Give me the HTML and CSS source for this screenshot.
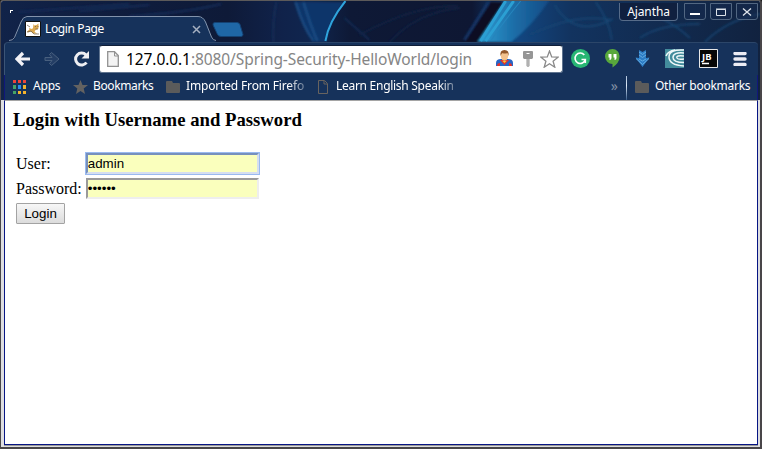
FILE: index.html
```html
<!DOCTYPE html>
<html lang="en">
<head>
<meta charset="utf-8">
<title>Login Page</title>
<link rel="stylesheet" href="styles.css">
</head>
<body>
<div class="window">
  <header class="titlebar">
    <svg class="wallpaper" viewBox="2 1 758 99" preserveAspectRatio="none" aria-hidden="true">
      <defs>
        <linearGradient id="sky" x1="0" x2="1" y1="0" y2="0">
          <stop offset="0" stop-color="#112349"/><stop offset=".15" stop-color="#0f1d3e"/><stop offset=".3" stop-color="#0e1a38"/><stop offset=".37" stop-color="#10224a"/><stop offset=".41" stop-color="#10264f"/><stop offset=".46" stop-color="#0e1936"/><stop offset=".62" stop-color="#0e1733"/><stop offset=".68" stop-color="#124680"/><stop offset=".75" stop-color="#12335f"/><stop offset="1" stop-color="#11223f"/>
        </linearGradient>
        <linearGradient id="ray" x1="0" x2="1" y1="0" y2="0"><stop offset="0" stop-color="#2f9fd4"/><stop offset=".5" stop-color="#1c6ea8"/><stop offset="1" stop-color="#154b85"/></linearGradient>
        <filter id="soft" x="-20%" y="-20%" width="140%" height="140%"><feGaussianBlur stdDeviation="1"/></filter>
      </defs>
      <path fill="url(#sky)" d="M0 0h762v102H0z"/>
      <g fill="none" filter="url(#soft)">
        <path stroke="#142c57" stroke-width="2" d="M20 12L130 4M80 11l70-6M130 16q55-3 92-12"/>
        <path stroke="#14305c" stroke-width="1.500" d="M277 2q-4 20-3 40M345 18l25 22"/>
        <path fill="#11356a" d="M295 2q10 28 19 40h13q3-22 18-40z"/>
        <path stroke="#1b5088" stroke-width="2" d="M296 2q8 26 18 39M304 2q8 26 14 39"/>
        <path stroke="#122546" stroke-width="1.500" d="M360 35q55-30 98-29M390 42q28-30 70-34"/>
        <path stroke="#16386b" stroke-width="3" d="M489 2l-24 38"/>
        <path fill="#080f22" d="M491 2h13l-24 40h-15z"/>
        <path fill="url(#ray)" d="M506 0h44q-18 26-38 42h-34z"/>
        <path stroke="#184674" stroke-width="1.500" d="M596 2q14 20 16 38M555 5q20 34 58 14M530 35q45-22 82-15M640 38q20-14 60-14M705 42q22-22 55-28M620 8q40 2 70 30"/>
      </g>
      <path fill="none" stroke="#2fa4dc" stroke-width="2" d="M346 1q-17 21-20 40"/>
      <path fill="none" stroke="#2b9fd3" stroke-width="3" d="M506 1l-25 40M514 1l-28 40"/>
      <path fill="none" stroke="#2685bd" stroke-width="1" d="M521 1q-18 22-30 40"/>
    </svg>
    <svg class="cursor-mark" width="4" height="4" viewBox="0 0 4 4"><path d="M0 0h3v1H1v2H0z" fill="#fff"/></svg>
    <div class="tab">
      <svg class="tab-shape" width="207" height="27" viewBox="0 0 207 27">
        <path d="M0 25.500q4 0 6-3L12 7q2-6 7-6h170q6 0 8 5l6 16q2 3.500 4 3.500V27H0z" fill="#16325b"/>
        <path d="M0 24.500q4 0 5.500-3L12 6q2-5.500 6-5.500h171q5 0 7.500 5.500l6 15q1.500 3.500 4.500 3.500" fill="none" stroke="#8293ac"/>
      </svg>
      <svg class="favicon" width="16" height="16" viewBox="0 0 16 16">
        <path fill="#fff" stroke="#111" d="M.5.5h15v15H.5z"/><path fill="#dba850" d="M8.500 3l1 1.500 2-.5 2-1.500v5l-3 1.500-1 2 3 1.500H8l-2-2-3 1-1-1 2.500-2L4 7l3 1 1-1z"/><path d="M2 4l3 2m-3 5l4-1 3 3h5M10 5.500h1m1.500 0h1m-3 2.500h2.500" fill="none" stroke="#665947" stroke-width=".7"/>
      </svg>
      <span class="tab-title">Login Page</span>
      <svg class="tab-close" width="9" height="9" viewBox="0 0 9 9"><path d="M1 1l7 7M8 1L1 8" stroke="#a5b0c1" stroke-width="1.500"/></svg>
    </div>
    <svg class="new-tab" width="32" height="15" viewBox="0 0 32 15"><path d="M3 .5h22q2 0 3 2l3 10q0 2-2 2H9q-3 0-4-3L1 3Q.5.5 3 .5z" fill="#1f67a6" stroke="#144273"/></svg>
    <div class="controls">
      <span class="profile">Ajantha</span>
      <span class="ctl"><svg width="20" height="15"><path d="M5 10h10" stroke="#fff" stroke-width="2"/></svg></span>
      <span class="ctl"><svg width="20" height="15"><path d="M5.500 5.500h9v6h-9zM5 5h10" fill="none" stroke="#dde3ea"/></svg></span>
      <span class="ctl"><svg width="20" height="15"><path d="M6 4.500l8 7m0-7l-8 7" stroke="#dde3ea" stroke-width="1.300"/></svg></span>
    </div>
  </header>

  <nav class="toolbar">
    <svg class="nav-icon" width="16" height="16" viewBox="0 0 16 16"><path d="M8 2L2 8l6 6M2.500 8H15" fill="none" stroke="#f2f2f6" stroke-width="3.200"/></svg>
    <svg class="nav-icon" width="16" height="16" viewBox="0 0 16 16"><path d="M1 6.500h7L5.500 3.500l2-2L15 8l-7.500 6.500-2-2L8 9.500H1z" fill="#243e65" stroke="#49607f"/></svg>
    <svg class="nav-icon" width="17" height="16" viewBox="0 0 17 16"><path d="M13 4A6 6 0 1 0 13.500 11.500" fill="none" stroke="#eeeef2" stroke-width="3"/><path d="M16 0v7.500H8.500z" fill="#eeeef2"/></svg>
    <div class="omnibox">
      <svg width="12" height="16" viewBox="0 0 12 16"><path d="M.7.700h6.800l3.800 3.800v10.800H.7z" fill="#f3f3f3" stroke="#919191" stroke-width="1.300"/><path d="M7.500 1v4H11" fill="none" stroke="#919191"/></svg>
      <span class="url"><b>127.0.0.1</b>:8080/Spring-Security-HelloWorld/login</span>
      <svg class="hero" width="17" height="17" viewBox="0 0 17 17"><path d="M0 16V13q0-4 5-4h7q5 0 5 4v3z" fill="#2865c6"/><path d="M1 16q0-3 3-3v3zM16 16q0-3-3-3v3zM4 10h9l-4.500 5z" fill="#e3322b"/><path d="M6.500 11h4l-2 2z" fill="#f3ca35"/><path d="M6 7h5v3l-2.500 1L6 10z" fill="#dca16a"/><ellipse cx="8.500" cy="5.500" rx="3.700" ry="4.500" fill="#f3c28e"/><path d="M4.500 6q-1-6 4-6t4 6l-1-3q-3 1-5 0l-1 1z" fill="#93582b"/></svg>
      <svg class="key" width="10" height="16" viewBox="0 0 10 16"><path d="M1 0h8q1 0 1 1v6l-1 1H6.500v7L5 16l-1.500-1V8H1L0 7V1q0-1 1-1z" fill="#969696"/><path d="M3.500 2.500h3" stroke="#fff"/><path d="M5 8v7" stroke="#ccc"/></svg>
      <svg class="star" width="19" height="18" viewBox="0 0 19 18"><path d="M9.500 1l2.200 5.900 6.300.3-4.900 4 1.700 6-5.300-3.400-5.300 3.400 1.700-6-4.900-4 6.300-.3z" fill="#fff" stroke="#8a8a8a" stroke-width="1.300"/></svg>
    </div>
    <div class="extensions">
      <svg width="19" height="19" viewBox="0 0 19 19"><circle cx="9.500" cy="9.500" r="9.500" fill="#28b674"/><path d="M13.300 6A5.200 5.200 0 1 0 14.300 10.500H10.500M14.300 10v4" fill="none" stroke="#fff" stroke-width="1.600"/></svg>
      <svg width="15" height="19" viewBox="0 0 15 19"><path d="M7.500 0a7 7 0 0 1 7 7.500Q14.500 14 7.500 18.500V15A7.500 7.500 0 0 1 7.500 0z" fill="#58a83c"/><path d="M3.500 5h3v4q0 2-2 2V8.500h-1zM8.500 5h3v4q0 2-2 2V8.500h-1z" fill="#fff"/></svg>
      <svg width="15" height="17" viewBox="0 0 15 17"><path d="M4 0l3.500 2L11 0v8l3.500-.5L7.500 17 .5 7.500 4 8z" fill="#2c7cc6"/><path d="M4 2l3.500 2.500L11 2M4 5l3.500 2.500L11 5M1 8.500l6.500 6 6.500-6M4 9l3.500 2L11 9" fill="none" stroke="#64acdf" stroke-width="1"/></svg>
      <svg width="19" height="19" viewBox="0 0 19 19"><path d="M0 0h19v19H0z" fill="#438c9c"/><path d="M19 1Q4 0 4 8q0 8 15 9M19 4Q8 3 8 8.500q0 5 11 5M19 7q-8-1-7 2 1 2 7 1M10 1Q3 2 1 7" fill="none" stroke="#eef7f8" stroke-width="1.500"/></svg>
      <svg width="19" height="19" viewBox="0 0 19 19"><path d="M.5.500h18v18H.5z" fill="#070707" stroke="#e8e8e8"/><text class="jb" x="3" y="10.500">JB</text><path d="M3 14.500h7" stroke="#fff" stroke-width="1.300"/></svg>
      <svg width="14" height="14" viewBox="0 0 14 14"><path d="M2 1.500h10M2 7h10M2 12.500h10" stroke="#ececf4" stroke-width="3.400" stroke-linecap="round"/></svg>
    </div>
  </nav>

  <nav class="bookmarks">
    <svg class="apps" width="13" height="14" viewBox="0 0 13 14"><path fill="#ef4438" d="M0 0h3v3H0zM5 0h3v3H5zM10 0h3v3h-3z"/><path fill="#46a466" d="M0 5h3v4H0zM0 11h3v3H0z"/><path fill="#2c8eed" d="M5 5h3v4H5z"/><path fill="#f3b32c" d="M10 5h3v4h-3zM5 11h3v3H5zM10 11h3v3h-3z"/></svg>
    <span class="t-apps">Apps</span>
    <svg class="bm-star" width="15" height="14" viewBox="0 0 15 14"><path d="M7.500 0l2 5H15l-4.300 3.500L12 14l-4.500-3L3 14l1.300-5.500L0 5h5.500z" fill="#636261"/></svg>
    <span class="t-book">Bookmarks</span>
    <svg class="folder" width="14" height="12" viewBox="0 0 14 12"><path d="M0 1q0-1 1-1h5l1 2h6q1 0 1 1v8q0 1-1 1H1q-1 0-1-1z" fill="#5b5b5b"/></svg>
    <span class="t-import fade">Imported From Firefo</span>
    <svg class="page-icon" width="10" height="14" viewBox="0 0 10 14"><path d="M.5.500h6l3 3v10h-9zM6 1v3h3" fill="none" stroke="#68635f"/></svg>
    <span class="t-learn fade">Learn English Speakin</span>
    <span class="more">»</span>
    <span class="separator"></span>
    <svg class="folder" width="14" height="12" viewBox="0 0 14 12"><path d="M0 1q0-1 1-1h5l1 2h6q1 0 1 1v8q0 1-1 1H1q-1 0-1-1z" fill="#5b5b5b"/></svg>
    <span class="t-other">Other bookmarks</span>
  </nav>

  <main class="page">
    <h3>Login with Username and Password</h3>
    <form>
      <table>
        <tr><td>User:</td><td><input class="focused" type="text" value="admin"></td></tr>
        <tr><td>Password:</td><td><input type="password" value="secret"></td></tr>
        <tr><td colspan="2"><button type="button">Login</button></td></tr>
      </table>
    </form>
  </main>
</div>
</body>
</html>
```
FILE: styles.css
```css
* { box-sizing: border-box; }
body { margin: 0; overflow: hidden; background: #1a1a1a; }
svg { display: block; flex: none; }
.window {
  position: relative;
  display: flex;
  flex-direction: column;
  width: 762px;
  height: 449px;
  border: 2px solid #494649;
  border-top: 1px solid #5c5a5a;
  border-left-width: 1px;
  border-radius: 3px 3px 0 0;
  background: #dedee0;
  overflow: hidden;
  font-family: "Noto Sans", sans-serif;
  font-size: 12px;
  color: #fff;
}
.titlebar { height: 41px; display: flex; flex: none; }
.wallpaper { position: absolute; inset: 0; width: 759px; height: 99px; }
.cursor-mark { position: absolute; left: 9px; top: 9px; }
.tab {
  position: relative;
  display: flex;
  align-items: center;
  width: 207px;
  height: 27px;
  margin: 15px 0 0 8px;
  padding: 0 15px 1px 16px;
}
.tab-shape { position: absolute; left: 0; top: 0; }
.favicon, .tab-close { position: relative; }
.tab-title { position: relative; margin: -2px 0 0 4px; flex: 1; white-space: nowrap; letter-spacing: -.37px; }
.new-tab { position: relative; margin: 21px 0 0 -4px; }
.controls { position: relative; display: flex; gap: 4px; margin: 2px 2px 0 auto; height: 18px; }
.profile {
  width: 59px; height: 18px;
  margin-right: 2px;
  border: 1px solid #576c89; border-top: 0;
  border-radius: 0 0 4px 4px;
  text-align: center; line-height: 17px; letter-spacing: -.1px;
  background: #10203f;
}
.ctl { width: 22px; height: 17px; border: 1px solid #526782; border-radius: 0 0 3px 3px; background: #152a4e99; }
.toolbar, .bookmarks { position: relative; display: flex; align-items: center; flex: none; margin: 0 2px 0 3px; background: #16325b; white-space: nowrap; }
.toolbar { height: 33px; padding-left: 10px; padding-bottom: 1px; border-top: 1px solid #2c4669; border-left: 1px solid #3c5577; border-radius: 4px 4px 0 0; }
.toolbar > .nav-icon { margin-right: 13px; }
.omnibox { display: flex; align-items: center; flex: none; width: 464px; height: 28px; margin-left: -4px; padding-left: 7px; border: 1px solid #60748f; border-top-color: #111f38; border-radius: 3px; background: #fff; color: #858585; }
.url { width: 370px; margin-left: 7px; font-size: 15.500px; line-height: 24px; letter-spacing: -.085px; }
.url b { color: #000; font-weight: normal; }
.key { margin-left: 10px; }
.star { margin-left: 7px; }
.extensions { display: flex; align-items: center; flex: 1; justify-content: space-between; margin: 0 11px 0 8px; }
.jb { font: bold 9.500px "Noto Sans", sans-serif; fill: #fff; }
.bookmarks { height: 25px; padding: 0 6px 0 8px; border-left: 1px solid #11187b; border-right: 1px solid #11187b; }
.bookmarks span { line-height: 18px; flex: none; margin-top: -3px; }
.bookmarks svg { margin-top: -1px; }
.t-apps { width: 27px; margin-left: 7px; letter-spacing: -.2px; }
.bm-star { margin-left: 13px; }
.t-book { width: 61px; margin-left: 5px; letter-spacing: -.38px; }
.bookmarks .folder { margin-left: 12px; }
.t-import { width: 119px; margin-left: 6px; letter-spacing: -.16px; }
.page-icon { margin-left: 13px; }
.t-learn { width: 120px; margin-left: 8px; letter-spacing: -.28px; }
.fade { -webkit-mask-image: linear-gradient(90deg, #000 86%, #0006 98%); mask-image: linear-gradient(90deg, #000 86%, #0006 98%); }
.bookmarks .more { margin-left: auto; color: #8290a4; font-size: 14px; }
.bookmarks .separator { width: 1px; height: 24px; margin: 0 0 0 8px; background: linear-gradient(#afc3dd, #dce7f5 40%, #365a88); }
.bookmarks .separator + .folder { margin-left: 8px; }
.t-other { width: 96px; margin-left: 6px; letter-spacing: -.27px; }
.page {
  position: relative;
  flex: 1;
  margin: 0 2px 2px 3px;
  padding: 8px;
  border: 1px solid #071584;
  border-top: 1px solid #a5a5a5;
  background: #fff;
  box-shadow: 0 1px 0 #999;
  color: #000;
  font: 16px "Liberation Serif", serif;
}
h3 { margin: 0 0 19px; font-size: 18.720px; line-height: 22px; }
form { margin: 0; }
table { border-spacing: 2px; }
td { padding: 1px; height: 23px; }
input { display: block; width: 173px; height: 21px; padding: 1px 0; border: 2px solid; border-color: #9a9a9a #eee #eee #9a9a9a; background: #faffbd; color: #000; font: 13.333px "Liberation Sans", sans-serif; outline: 0; }
input.focused { box-shadow: 0 0 0 1px #9abaf0; border-color: #7790bd #d5def0 #d5def0 #7790bd; }
button { display: block; width: 49px; height: 21px; padding: 0; border: 1px solid #a3a3a3; border-radius: 1px; background: linear-gradient(#f7f7f7, #dcdcdc); color: #000; font: 13.333px "Liberation Sans", sans-serif; }
```
